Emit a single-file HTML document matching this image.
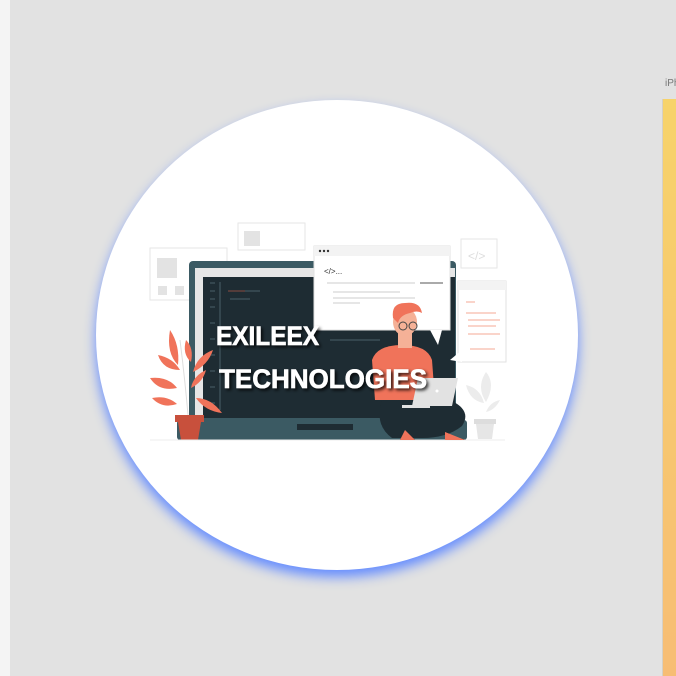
<!DOCTYPE html>
<html><head><style>
html,body{margin:0;padding:0;width:676px;height:676px;overflow:hidden;background:#e2e2e2;font-family:"Liberation Sans",sans-serif}
.strip{position:absolute;left:0;top:0;width:10px;height:676px;background:#f4f4f4}
.panel{position:absolute;left:662px;top:99px;width:14px;height:577px;background:linear-gradient(#f7d36a,#f7bd74);border-left:1px solid #d6d0c4}
.iph{position:absolute;left:665px;top:78px;font-size:10px;color:#777}
.circle{position:absolute;left:96px;top:100px;width:482px;height:470px;border-radius:50%;background:#fff;box-shadow:0 7px 12px rgba(100,140,255,1)}
svg{position:absolute;left:0;top:0}
</style></head><body>
<div class="strip"></div>
<div class="iph">iPh</div>
<div class="panel"></div>
<div class="circle"></div>
<svg width="676" height="676" viewBox="0 0 676 676">
<defs><filter id="sh" x="-10%" y="-30%" width="130%" height="170%"><feDropShadow dx="2" dy="2" stdDeviation="1.5" flood-color="#000" flood-opacity="0.8"/></filter></defs>
<rect x="150" y="248" width="77" height="52" fill="#fff" stroke="#e6e6e6"/>
<rect x="157" y="258" width="20" height="20" fill="#e3e3e3"/>
<rect x="158" y="286" width="9" height="9" fill="#e3e3e3"/><rect x="175" y="286" width="9" height="9" fill="#e3e3e3"/>
<rect x="238" y="223" width="67" height="27" fill="#fff" stroke="#e6e6e6"/>
<rect x="244" y="231" width="16" height="15" fill="#e3e3e3"/>
<rect x="461" y="239" width="36" height="29" fill="#fff" stroke="#e6e6e6"/>
<text x="468" y="260" font-size="12" fill="#ddd">&lt;/&gt;</text>
<rect x="189" y="261" width="267" height="162" rx="4" fill="#3b5a63"/>
<rect x="195" y="268" width="260" height="150" fill="#e6e6e6"/>
<rect x="203" y="277" width="252" height="141" fill="#1e2c33"/>
<g stroke="#4a6069" stroke-width="1">
<line x1="210" y1="283" x2="215" y2="283"/><line x1="210" y1="291" x2="215" y2="291"/><line x1="210" y1="299" x2="215" y2="299"/><line x1="210" y1="307" x2="215" y2="307"/><line x1="210" y1="323" x2="215" y2="323"/><line x1="210" y1="339" x2="215" y2="339"/><line x1="210" y1="355" x2="215" y2="355"/><line x1="210" y1="371" x2="215" y2="371"/><line x1="210" y1="387" x2="215" y2="387"/><line x1="210" y1="403" x2="215" y2="403"/>
<line x1="220" y1="282" x2="220" y2="410"/>
<line x1="230" y1="291" x2="260" y2="291"/><line x1="230" y1="299" x2="250" y2="299"/><line x1="330" y1="340" x2="380" y2="340"/>
</g>
<line x1="228" y1="291" x2="245" y2="291" stroke="#8a4b42"/>
<rect x="177" y="420" width="290" height="20" rx="3" fill="#3b5a63"/>
<rect x="297" y="424" width="56" height="6" fill="#1e2c33"/>
<rect x="314" y="246" width="136" height="84" fill="#fff" stroke="#e2e2e2"/>
<rect x="314" y="246" width="136" height="10" fill="#f3f3f3"/>
<circle cx="320" cy="251" r="1.2" fill="#333"/><circle cx="324" cy="251" r="1.2" fill="#333"/><circle cx="328" cy="251" r="1.2" fill="#333"/>
<text x="324" y="274" font-size="8" fill="#333">&lt;/&gt;...</text>
<g stroke="#ccc"><line x1="327" y1="283" x2="415" y2="283"/><line x1="333" y1="292" x2="400" y2="292"/><line x1="333" y1="298" x2="415" y2="298"/><line x1="333" y1="303" x2="360" y2="303"/></g>
<line x1="420" y1="283" x2="443" y2="283" stroke="#555"/>
<polygon points="430,330 442,330 438,345" fill="#fff"/>
<rect x="458" y="281" width="48" height="81" fill="#fff" stroke="#e2e2e2"/>
<rect x="458" y="281" width="48" height="9" fill="#f3f3f3"/>
<g stroke="#f4a896"><line x1="466" y1="302" x2="475" y2="302"/><line x1="466" y1="313" x2="496" y2="313"/><line x1="468" y1="320" x2="500" y2="320"/><line x1="468" y1="326" x2="496" y2="326"/><line x1="468" y1="334" x2="500" y2="334"/><line x1="470" y1="349" x2="495" y2="349"/></g>
<polygon points="450,360 462,350 462,362" fill="#fff"/>
<g fill="#f0735a">
<path d="M170 330 q10 15 8 35 q-12 -12 -8 -35z"/>
<path d="M158 355 q15 3 22 15 q-17 0 -22 -15z"/>
<path d="M150 378 q18 -2 27 10 q-18 4 -27 -10z"/>
<path d="M152 398 q15 -3 25 6 q-15 5 -25 -6z"/>
<path d="M213 350 q-5 15 -20 22 q4 -16 20 -22z"/>
<path d="M206 370 q-3 12 -15 18 q2 -12 15 -18z"/>
<path d="M196 398 q15 0 26 15 q-17 -2 -26 -15z"/>
<path d="M186 340 q8 8 5 22 q-9 -8 -5 -22z"/>
</g>
<path d="M180 340 q5 40 8 75" stroke="#ddd" fill="none"/>
<rect x="175" y="415" width="29" height="7" fill="#c8503c"/>
<path d="M178 422 h23 l-3 18 h-17z" fill="#c8503c"/>
<g fill="#ececec">
<path d="M486 372 q10 12 0 30 q-10 -15 0 -30z"/>
<path d="M466 385 q14 3 18 18 q-14 -2 -18 -18z"/>
<path d="M500 400 q-5 10 -14 12 q4 -10 14 -12z"/>
</g>
<rect x="474" y="419" width="22" height="5" fill="#ddd"/>
<path d="M476 424 h18 l-2 15 h-14z" fill="#e6e6e6"/>
<line x1="150" y1="440" x2="505" y2="440" stroke="#eee"/>
<path d="M372 360 q5 -15 30 -15 q25 0 30 15 l3 40 h-60z" fill="#f0735a"/>
<path d="M398 330 h14 v18 h-14z" fill="#f5b197"/>
<ellipse cx="405" cy="322" rx="12" ry="14" fill="#f5b197"/>
<path d="M393 318 q-2 -15 12 -15 q15 -2 17 10 q-5 -3 -12 0 q-10 2 -12 10 z" fill="#f0735a"/>
<circle cx="403" cy="326" r="4" fill="none" stroke="#444"/><circle cx="413" cy="326" r="4" fill="none" stroke="#444"/>
<path d="M382 400 q-8 25 10 38 h30 q25 0 40 -12 q10 -15 -10 -25 z" fill="#1e2c33"/>
<path d="M405 430 l10 10 h-15z" fill="#f0735a"/><path d="M445 432 l20 8 h-20z" fill="#f0735a"/>
<path d="M418 378 h40 l-6 28 h-40z" fill="#e2e2e2"/>
<path d="M402 405 h28 v3 h-28z" fill="#e2e2e2"/>
<circle cx="437" cy="391" r="1.5" fill="#fff"/>
<g font-family="Liberation Sans, sans-serif" font-weight="bold" font-size="27" fill="#fff" stroke="#fff" stroke-width="0.6" filter="url(#sh)">
<text x="216" y="345" textLength="103" lengthAdjust="spacingAndGlyphs">EXILEEX</text>
<text x="219" y="388" textLength="208" lengthAdjust="spacingAndGlyphs">TECHNOLOGIES</text>
</g>
</svg>
</body></html>
